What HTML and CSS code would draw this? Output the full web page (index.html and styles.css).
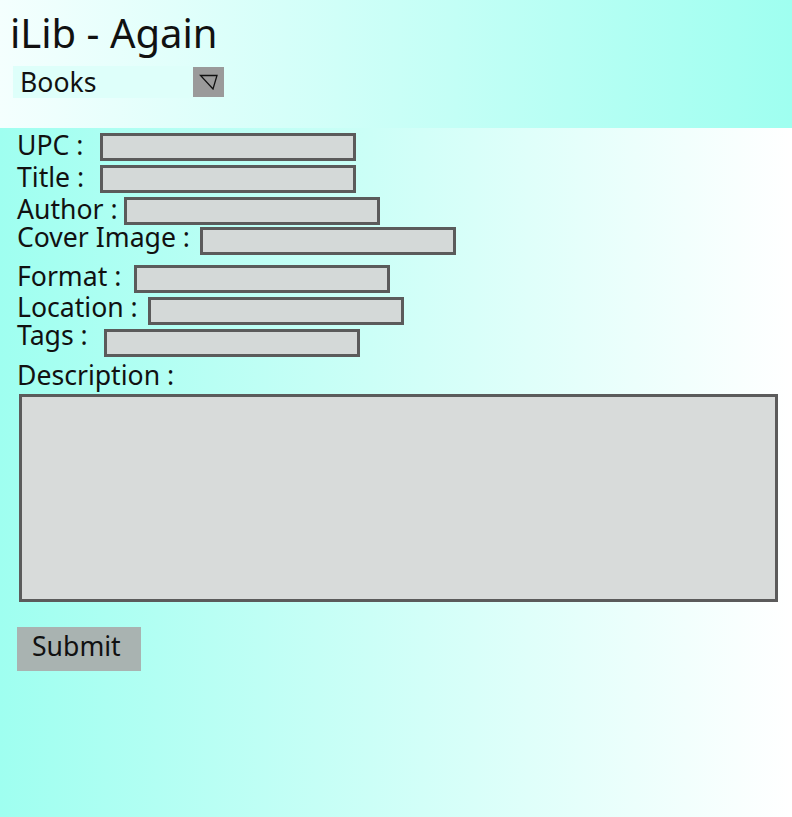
FILE: index.html
```html
<!DOCTYPE html>
<html>
<head>
<meta charset="utf-8">
<title>iLib - Again</title>
<link rel="stylesheet" href="styles.css">
</head>
<body>
<header class="top">
  <h1 class="title">iLib - Again</h1>
  <div class="select">
    <span class="select-text">Books</span>
    <span class="select-arrow">
      <svg width="20" height="16" viewBox="0 0 20 16"><polygon points="1.5,1.5 18,1.5 14,15" fill="none" stroke="#111" stroke-width="1.3" stroke-linejoin="miter"/></svg>
    </span>
  </div>
</header>
<main class="form">
  <div class="row r1"><label class="lbl w-upc">UPC :</label><span class="field"></span></div>
  <div class="row r2"><label class="lbl w-title">Title :</label><span class="field"></span></div>
  <div class="row r3"><label class="lbl w-author">Author :</label><span class="field"></span></div>
  <div class="row r4"><label class="lbl w-cover">Cover Image :</label><span class="field"></span></div>
  <div class="row r5"><label class="lbl w-format">Format :</label><span class="field"></span></div>
  <div class="row r6"><label class="lbl w-location">Location :</label><span class="field"></span></div>
  <div class="row r7"><label class="lbl w-tags">Tags :</label><span class="field"></span></div>
  <div class="desc-label">Description :</div>
  <div class="textarea"></div>
  <div class="submit">Submit</div>
</main>
</body>
</html>
```
FILE: styles.css
```css
html, body {
  margin: 0;
  padding: 0;
}
body {
  width: 792px;
  height: 817px;
  overflow: hidden;
  font-family: "Noto Sans", "Open Sans", sans-serif;
  color: #111;
  display: flex;
  flex-direction: column;
}
.top {
  height: 128px;
  box-sizing: border-box;
  padding: 11px 0 0 10px;
  background: linear-gradient(to right, #f4fffe 0%, #9ffff0 100%);
}
.title {
  margin: 0;
  font-size: 40px;
  font-weight: normal;
  line-height: 44px;
}
.select {
  margin: 11px 0 0 3px;
  width: 211px;
  height: 32px;
  background: #defffa;
  display: flex;
  align-items: center;
  box-sizing: border-box;
  padding-left: 7px;
}
.select-text {
  font-size: 26.6px;
  line-height: 32px;
}
.select-arrow {
  margin-left: auto;
  width: 31px;
  height: 30px;
  background: #9a9a9a;
  display: flex;
  align-items: center;
  justify-content: center;
}
.select-arrow svg {
  display: block;
  margin-left: 1px;
}
.form {
  flex: 1;
  padding: 4px 0 0 17px;
  background: linear-gradient(to right, #9ffff0 0%, #ffffff 100%);
}
.row {
  display: flex;
  align-items: flex-start;
}
.lbl {
  font-size: 26.6px;
  line-height: 28px;
  margin-top: -1px;
  white-space: nowrap;
  flex: none;
}
.field {
  display: block;
  width: 256px;
  height: 28px;
  box-sizing: border-box;
  border: 3px solid #5b5b5b;
  background: #d4d9d8;
}
.r1 { height: 32px; }
.r1 .field { margin-top: 1px; }
.r2 { height: 32px; }
.r2 .field { margin-top: 1px; }
.r3 { height: 28px; }
.r3 .field { margin-top: 1px; }
.r4 { height: 39px; }
.r4 .field { margin-top: 3px; }
.r5 { height: 31px; }
.r5 .field { margin-top: 2px; }
.r6 { height: 28px; }
.r6 .field { margin-top: 3px; }
.r7 { height: 40px; }
.r7 .field { margin-top: 7px; }
.w-upc { width: 83px; }
.w-title { width: 83px; }
.w-author { width: 107px; }
.w-cover { width: 183px; }
.w-format { width: 117px; }
.w-location { width: 131px; }
.w-tags { width: 87px; }
.desc-label {
  font-size: 26.6px;
  line-height: 26px;
  height: 32px;
}
.textarea {
  margin-left: 2px;
  width: 759px;
  height: 208px;
  box-sizing: border-box;
  border: 3px solid #5b5b5b;
  background: #d8dbda;
}
.submit {
  margin: 25px 0 0 0;
  width: 124px;
  height: 44px;
  box-sizing: border-box;
  padding-left: 15px;
  background: #a9b3b1;
  font-size: 26.6px;
  line-height: 38px;
}
```
